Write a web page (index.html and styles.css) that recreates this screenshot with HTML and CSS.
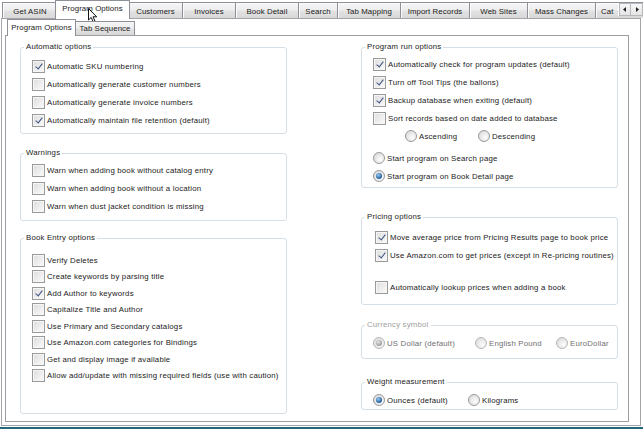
FILE: index.html
```html
<!DOCTYPE html>
<html>
<head>
<meta charset="utf-8">
<title>Program Options</title>
<link rel="stylesheet" href="styles.css">
</head>
<body>
<div class="window">
  <div class="tabstrip">
    <div class="tab w-asin">Get ASIN</div>
    <div class="tab sel w-prog">Program Options</div>
    <div class="tab w-cust">Customers</div>
    <div class="tab w-inv">Invoices</div>
    <div class="tab w-book">Book Detail</div>
    <div class="tab w-search">Search</div>
    <div class="tab w-map">Tab Mapping</div>
    <div class="tab w-imp">Import Records</div>
    <div class="tab w-web">Web Sites</div>
    <div class="tab w-mass">Mass Changes</div>
    <div class="tab w-cat">Cat</div>
    <div class="scroller">
      <span class="sbtn"><svg width="4" height="5" viewBox="0 0 4 5"><path d="M3 0v5L0 2.5z" fill="#222"/></svg></span>
      <span class="sbtn"><svg width="4" height="5" viewBox="0 0 4 5"><path d="M1 0v5l3-2.5z" fill="#222"/></svg></span>
    </div>
    <svg class="cursor" width="10" height="15" viewBox="0 0 10 15"><path d="M0.5 0.5V12L3.2 9.4L5.2 13.8L7 13L5 8.8H8.7Z" fill="#fff" stroke="#111" stroke-width="1" stroke-linejoin="round"/></svg>
  </div>

  <div class="outer">
    <div class="subtabs">
      <div class="stab sel">Program Options</div>
      <div class="stab">Tab Sequence</div>
    </div>
    <div class="page">
      <div class="col">
        <fieldset class="grp g-auto">
          <legend>Automatic options</legend>
          <div class="body">
            <label class="row"><span class="cb on"></span>Automatic SKU numbering</label>
            <label class="row"><span class="cb"></span>Automatically generate customer numbers</label>
            <label class="row"><span class="cb"></span>Automatically generate invoice numbers</label>
            <label class="row"><span class="cb on"></span>Automatically maintain file retention (default)</label>
          </div>
        </fieldset>

        <fieldset class="grp g-warn">
          <legend>Warnings</legend>
          <div class="body">
            <label class="row"><span class="cb"></span>Warn when adding book without catalog entry</label>
            <label class="row"><span class="cb"></span>Warn when adding book without a location</label>
            <label class="row"><span class="cb"></span>Warn when dust jacket condition is missing</label>
          </div>
        </fieldset>

        <fieldset class="grp g-entry">
          <legend>Book Entry options</legend>
          <div class="body">
            <label class="row"><span class="cb"></span>Verify Deletes</label>
            <label class="row"><span class="cb"></span>Create keywords by parsing title</label>
            <label class="row"><span class="cb on"></span>Add Author to keywords</label>
            <label class="row"><span class="cb"></span>Capitalize Title and Author</label>
            <label class="row"><span class="cb"></span>Use Primary and Secondary catalogs</label>
            <label class="row"><span class="cb"></span>Use Amazon.com categories for Bindings</label>
            <label class="row"><span class="cb"></span>Get and display image if available</label>
            <label class="row"><span class="cb"></span>Allow add/update with missing required fields (use with caution)</label>
          </div>
        </fieldset>
      </div>

      <div class="col">
        <fieldset class="grp g-run">
          <legend>Program run options</legend>
          <div class="body">
            <label class="row"><span class="cb on"></span>Automatically check for program updates (default)</label>
            <label class="row"><span class="cb on"></span>Turn off Tool Tips (the ballons)</label>
            <label class="row"><span class="cb on"></span>Backup database when exiting (default)</label>
            <label class="row"><span class="cb"></span>Sort records based on date added to database</label>
            <div class="row radios indent">
              <label class="ropt w-asc"><span class="rb"></span>Ascending</label>
              <label class="ropt"><span class="rb"></span>Descending</label>
            </div>
            <label class="row gap-top"><span class="rb"></span>Start program on Search page</label>
            <label class="row"><span class="rb on"></span>Start program on Book Detail page</label>
          </div>
        </fieldset>

        <fieldset class="grp g-price">
          <legend>Pricing options</legend>
          <div class="body">
            <label class="row"><span class="cb on"></span>Move average price from Pricing Results page to book price</label>
            <label class="row"><span class="cb on"></span>Use Amazon.com to get prices (except in Re-pricing routines)</label>
            <label class="row gap-big"><span class="cb"></span>Automatically lookup prices when adding a book</label>
          </div>
        </fieldset>

        <fieldset class="grp g-cur disabled">
          <legend>Currency symbol</legend>
          <div class="body">
            <div class="row radios">
              <label class="ropt w-usd"><span class="rb on"></span>US Dollar (default)</label>
              <label class="ropt w-gbp"><span class="rb"></span>English Pound</label>
              <label class="ropt"><span class="rb"></span>EuroDollar</label>
            </div>
          </div>
        </fieldset>

        <fieldset class="grp g-weight">
          <legend>Weight measurement</legend>
          <div class="body">
            <div class="row radios short">
              <label class="ropt w-oz"><span class="rb on"></span>Ounces (default)</label>
              <label class="ropt"><span class="rb"></span>Kilograms</label>
            </div>
          </div>
        </fieldset>
      </div>
    </div>
  </div>
  <div class="statusline"></div>
</div>
</body>
</html>
```

FILE: styles.css
```css
* { box-sizing: border-box; }

html, body {
  margin: 0;
  padding: 0;
  background: #ffffff;
}

body {
  font-family: "Liberation Sans", Arial, sans-serif;
  font-size: 7.8px;
  letter-spacing: 0.2px;
  color: #222;
}

.window {
  width: 643px;
  height: 429px;
  position: relative;
  overflow: hidden;
  background: #fff;
  display: flex;
  flex-direction: column;
}

/* ---------- top tab strip ---------- */
.tabstrip {
  height: 18px;
  flex: none;
  display: flex;
  align-items: flex-end;
  padding-left: 2px;
  position: relative;
  z-index: 2;
  overflow: visible;
}

.tab {
  flex: none;
  height: 16px;
  border: 1px solid #8d9096;
  border-bottom: 0;
  border-right: 0;
  background: linear-gradient(#f5f5f5, #eeeeee 45%, #e2e2e2 55%, #d8d8d8);
  box-shadow: inset 1px 1px 0 #fbfbfb;
  display: flex;
  align-items: center;
  justify-content: center;
  white-space: nowrap;
  padding-top: 1px;
  color: #1a1a1a;
  letter-spacing: 0.1px;
}

.tab.sel {
  height: 19px;
  margin: 0 -2px -1px -2px;
  border-right: 1px solid #8d9096;
  background: #fff;
  box-shadow: none;
  position: relative;
  z-index: 1;
  padding-top: 0;
  padding-bottom: 3px;
}

.w-asin { width: 55px; }
.w-prog { width: 75px; }
.w-cust { width: 54px; }
.w-inv { width: 53px; }
.w-book { width: 63px; }
.w-search { width: 39px; }
.w-map { width: 63px; }
.w-imp { width: 69px; }
.w-web { width: 58px; }
.w-mass { width: 68px; }
.w-cat { width: 60px; justify-content: flex-start; padding-left: 5px; }

.scroller {
  position: absolute;
  right: 0;
  top: 3px;
  display: flex;
  background: #fff;
  padding-left: 1px;
  z-index: 3;
}

.sbtn {
  width: 12px;
  height: 13px;
  border: 1px solid #b5b8bd;
  background: linear-gradient(#f7f7f7, #e4e4e4);
  display: flex;
  align-items: center;
  justify-content: center;
}

.sbtn + .sbtn { border-left: 0; }

.cursor {
  position: absolute;
  left: 88px;
  top: 8px;
  z-index: 5;
}

/* ---------- outer panel ---------- */
.outer {
  flex: none;
  height: 408px;
  margin: 0 2px 0 1px;
  border: 1px solid #a3a5aa;
  padding: 0 11px 3px 3px;
  display: flex;
  flex-direction: column;
  background: #fff;
}

.subtabs {
  height: 16px;
  flex: none;
  display: flex;
  align-items: flex-end;
  padding-left: 2px;
  position: relative;
  z-index: 2;
}

.stab {
  flex: none;
  height: 14px;
  border: 1px solid #8d9096;
  border-bottom: 0;
  border-left: 0;
  background: linear-gradient(#f5f5f5, #eeeeee 45%, #e2e2e2 55%, #d8d8d8);
  display: flex;
  align-items: center;
  justify-content: center;
  white-space: nowrap;
  width: 59px;
  letter-spacing: 0.1px;
}

.stab.sel {
  width: 69px;
  height: 17px;
  margin-bottom: -1px;
  background: #fff;
  border-left: 1px solid #8d9096;
  padding-bottom: 2px;
}

.page {
  flex: 1;
  border: 1px solid #9c9ea3;
  background: #fff;
  padding: 6px 0 0 14px;
  display: grid;
  grid-template-columns: 267px 257px;
  column-gap: 74px;
  align-items: start;
}

.col {
  display: flex;
  flex-direction: column;
}

/* ---------- group boxes ---------- */
.grp {
  margin: 0;
  padding: 0;
  min-width: 0;
  border: 1px solid #d5dfe5;
  border-radius: 3px;
}

.grp legend {
  font-size: 7.8px;
  line-height: 10px;
  height: 10px;
  padding: 0 2px;
  margin-left: 3px;
  color: #222;
}

.body {
  display: flex;
  flex-direction: column;
  padding-left: 11px;
}

.row {
  display: flex;
  align-items: center;
  gap: 2px;
  height: 18px;
  white-space: nowrap;
}

.g-auto .body { padding-top: 5px; padding-bottom: 4px; }
.g-warn { margin-top: 14px; }
.g-warn .body { padding-top: 3px; padding-bottom: 5px; }
.g-entry { margin-top: 12px; }
.g-entry .body { padding-top: 9px; padding-bottom: 29px; }
.g-entry .row { height: 16.5px; }

.g-run .body { padding-top: 3px; padding-bottom: 2px; }
.indent { padding-left: 32px; }
.gap-top { margin-top: 4px; }

.g-price { margin-top: 24px; }
.g-price .body { padding: 6px 0 8px 13px; }
.gap-big { margin-top: 14px; }

.g-cur { margin-top: 15px; }
.g-cur .body { padding-top: 4px; padding-bottom: 6px; }

.g-weight { margin-top: 18px; }
.g-weight .body { padding-top: 6px; padding-bottom: 2px; }
.row.short { height: 14px; }

.radios { gap: 0; }
.ropt {
  display: flex;
  align-items: center;
  gap: 2px;
  flex: none;
}
.w-asc { width: 73px; }
.w-usd { width: 102px; }
.w-gbp { width: 81px; }
.w-oz { width: 95px; }

.disabled legend { color: #a0a0a0; }
.disabled .ropt { color: #707070; }

/* ---------- checkbox ---------- */
.cb {
  flex: none;
  width: 13px;
  height: 13px;
  border: 1px solid #999a9a;
  background: linear-gradient(135deg, #dcdcdc, #efefef 60%, #fafafa);
  box-shadow: inset 0 0 0 1px #f6f6f6;
  position: relative;
}

.cb.on::after {
  content: "";
  position: absolute;
  left: 4px;
  top: 1.5px;
  width: 3px;
  height: 6px;
  border: solid #405383;
  border-width: 0 1.6px 1.6px 0;
  transform: rotate(38deg);
}

/* ---------- radio ---------- */
.rb {
  flex: none;
  width: 12px;
  height: 12px;
  border-radius: 50%;
  border: 1px solid #999a9a;
  background: radial-gradient(circle at 65% 65%, #fdfdfd, #e4e4e4 60%, #d2d2d2);
  position: relative;
}

.rb.on::after {
  content: "";
  position: absolute;
  left: 2px;
  top: 2px;
  width: 6px;
  height: 6px;
  border-radius: 50%;
  background: radial-gradient(circle at 40% 35%, #9fd0f4, #2a67a6 60%, #103a6e);
}

.disabled .rb { border-color: #b8b8b8; }
.disabled .rb.on::after {
  background: radial-gradient(circle at 40% 35%, #e8e8e8, #a5a5a5 60%, #7d7d7d);
}

/* ---------- bottom line ---------- */
.statusline {
  flex: none;
  height: 2px;
  margin-top: 1px;
  background: #24687c;
}
```
